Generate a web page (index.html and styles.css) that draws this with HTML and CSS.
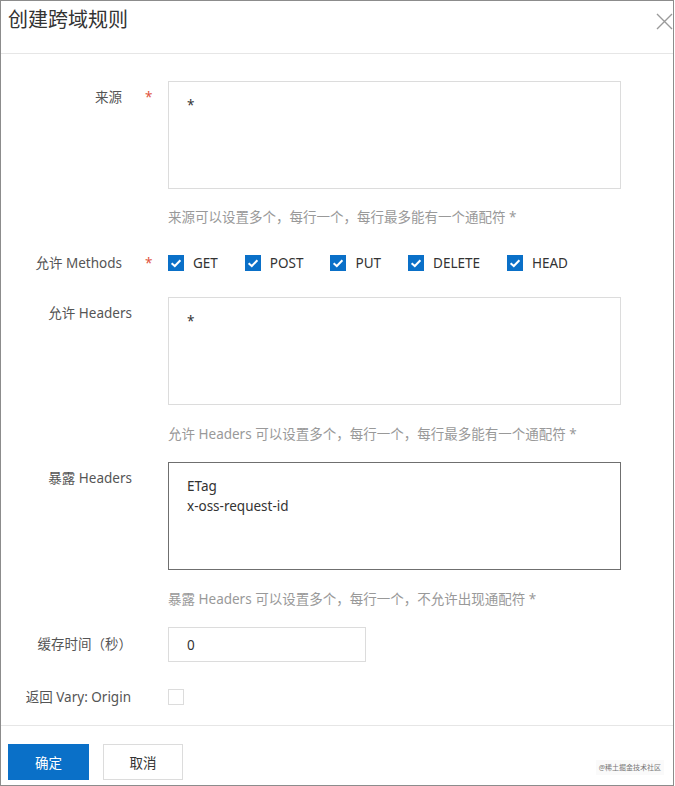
FILE: index.html
```html
<!DOCTYPE html>
<html lang="zh-CN">
<head>
<meta charset="utf-8">
<title>创建跨域规则</title>
<link rel="stylesheet" href="styles.css">
</head>
<body>
<div class="dialog">
  <div class="dialog-header">
    <h1 class="dialog-title">创建跨域规则</h1>
    <span class="dialog-close" aria-label="关闭">
      <svg width="17" height="17" viewBox="0 0 17 17"><path d="M1 1 L16 16 M16 1 L1 16" stroke="#9a9a9a" stroke-width="1.4" fill="none"/></svg>
    </span>
  </div>

  <div class="dialog-body">
    <div class="form-item item-origin">
      <label class="form-label required">来源</label>
      <span class="form-req">*</span>
      <textarea class="form-textarea" readonly>*</textarea>
      <div class="form-help">来源可以设置多个，每行一个，每行最多能有一个通配符 *</div>
    </div>

    <div class="form-item item-methods">
      <label class="form-label required">允许 Methods</label>
      <span class="form-req">*</span>
      <div class="checkbox-group">
        <span class="checkbox-item"><span class="cb checked"><svg viewBox="0 0 16 16" width="16" height="16"><path d="M3.6 8.2 L6.8 11 L12.4 5.2" stroke="#fff" stroke-width="2" fill="none"/></svg></span>GET</span>
        <span class="checkbox-item"><span class="cb checked"><svg viewBox="0 0 16 16" width="16" height="16"><path d="M3.6 8.2 L6.8 11 L12.4 5.2" stroke="#fff" stroke-width="2" fill="none"/></svg></span>POST</span>
        <span class="checkbox-item"><span class="cb checked"><svg viewBox="0 0 16 16" width="16" height="16"><path d="M3.6 8.2 L6.8 11 L12.4 5.2" stroke="#fff" stroke-width="2" fill="none"/></svg></span>PUT</span>
        <span class="checkbox-item"><span class="cb checked"><svg viewBox="0 0 16 16" width="16" height="16"><path d="M3.6 8.2 L6.8 11 L12.4 5.2" stroke="#fff" stroke-width="2" fill="none"/></svg></span>DELETE</span>
        <span class="checkbox-item"><span class="cb checked"><svg viewBox="0 0 16 16" width="16" height="16"><path d="M3.6 8.2 L6.8 11 L12.4 5.2" stroke="#fff" stroke-width="2" fill="none"/></svg></span>HEAD</span>
      </div>
    </div>

    <div class="form-item item-allow">
      <label class="form-label">允许 Headers</label>
      <span class="form-req"></span>
      <textarea class="form-textarea" readonly>*</textarea>
      <div class="form-help">允许 Headers 可以设置多个，每行一个，每行最多能有一个通配符 *</div>
    </div>

    <div class="form-item item-expose">
      <label class="form-label">暴露 Headers</label>
      <span class="form-req"></span>
      <textarea class="form-textarea focused" readonly>ETag
x-oss-request-id</textarea>
      <div class="form-help">暴露 Headers 可以设置多个，每行一个，不允许出现通配符 *</div>
    </div>

    <div class="form-item item-cache">
      <label class="form-label">缓存时间（秒）</label>
      <span class="form-req"></span>
      <input class="form-input" type="text" value="0" readonly>
    </div>

    <div class="form-item item-vary">
      <label class="form-label">返回 Vary: Origin</label>
      <span class="form-req"></span>
      <div class="checkbox-group"><span class="cb"></span></div>
    </div>
  </div>

  <div class="dialog-footer">
    <button class="btn btn-primary" type="button">确定</button>
    <button class="btn btn-normal" type="button">取消</button>
    <span class="watermark">@稀土掘金技术社区</span>
  </div>
</div>
</body>
</html>
```

FILE: styles.css
```css
html, body {
  margin: 0;
  padding: 0;
  background: #fff;
}

body {
  font-family: "Segoe UI", "Noto Sans", "Noto Sans CJK SC", sans-serif;
  font-size: 13.5px;
  color: #333;
}

.dialog {
  width: 674px;
  height: 786px;
  box-sizing: border-box;
  border: 1px solid #8c8c8c;
  display: flex;
  flex-direction: column;
  background: #fff;
}

.dialog-header {
  height: 53px;
  box-sizing: border-box;
  border-bottom: 1px solid #e6e6e6;
  padding: 6px 0 0 7px;
  position: relative;
  flex: none;
}

.dialog-title {
  margin: 0;
  font-size: 20px;
  line-height: 26px;
  font-weight: normal;
  color: #333;
}

.dialog-close {
  position: absolute;
  right: 0;
  top: 12px;
  width: 17px;
  height: 17px;
}

.dialog-close svg {
  display: block;
}

.dialog-body {
  flex: 1;
  padding: 27px 0 0 7px;
}

.form-item {
  display: grid;
  grid-template-columns: 124px 36px 453px;
  align-items: start;
}

.form-label {
  grid-column: 1;
  text-align: right;
  line-height: 20px;
  padding-top: 6px;
  color: #555;
  white-space: nowrap;
}

.form-label.required {
  padding-right: 10px;
}

.form-req {
  grid-column: 2;
  color: #e0533c;
  line-height: 20px;
  padding-top: 6px;
  padding-left: 13px;
}

.form-textarea {
  grid-column: 3;
  display: block;
  width: 453px;
  height: 108px;
  box-sizing: border-box;
  border: 1px solid #dcdcdc;
  padding: 13px 18px;
  margin: 0;
  font: inherit;
  line-height: 20px;
  color: #333;
  resize: none;
  outline: none;
  overflow: hidden;
}

.form-textarea.focused {
  border-color: #6f6f6f;
}

.form-help {
  grid-column: 3;
  margin-top: 18px;
  line-height: 20px;
  color: #999;
  white-space: nowrap;
}

.item-methods {
  margin-top: 26px;
}

.item-methods .form-label,
.item-methods .form-req {
  padding-top: 0;
}

.item-allow {
  margin-top: 24px;
}

.item-allow .form-help {
  margin-top: 19px;
}

.item-expose {
  margin-top: 18px;
}

.item-expose .form-help {
  margin-top: 19px;
}

.item-cache {
  margin-top: 18px;
}

.item-cache .form-label {
  padding-top: 7px;
}

.form-input {
  grid-column: 3;
  width: 198px;
  height: 35px;
  box-sizing: border-box;
  border: 1px solid #dcdcdc;
  padding: 0 18px;
  margin: 0;
  font: inherit;
  color: #333;
  outline: none;
}

.item-vary {
  margin-top: 25px;
}

.item-vary .form-label {
  padding-top: 0;
  padding-right: 1px;
}

.checkbox-group {
  grid-column: 3;
  display: flex;
  align-items: center;
  height: 20px;
  gap: 27px;
  color: #333;
}

.checkbox-item {
  display: inline-flex;
  align-items: center;
  gap: 9px;
  line-height: 20px;
}

.cb {
  display: inline-block;
  width: 16px;
  height: 16px;
  box-sizing: border-box;
  border: 1px solid #dcdcdc;
  background: #fff;
  flex: none;
}

.cb.checked {
  border: none;
  background: #0a70c8;
}

.cb svg {
  display: block;
}

.dialog-footer {
  flex: none;
  height: 60px;
  box-sizing: border-box;
  border-top: 1px solid #e6e6e6;
  padding: 18px 0 0 7px;
  display: flex;
  align-items: flex-start;
  gap: 14px;
  position: relative;
}

.btn {
  height: 36px;
  margin: 0;
  font: inherit;
  font-size: 13.5px;
  cursor: pointer;
  box-sizing: border-box;
}

.btn-primary {
  width: 81px;
  background: #0a70c8;
  color: #fff;
  border: none;
}

.btn-normal {
  width: 80px;
  background: #fff;
  color: #333;
  border: 1px solid #dcdcdc;
}

.watermark {
  position: absolute;
  right: 9px;
  top: 34px;
  font-size: 7px;
  line-height: 15px;
  padding: 0 3px;
  color: #777;
  background: #fafafa;
}
```
